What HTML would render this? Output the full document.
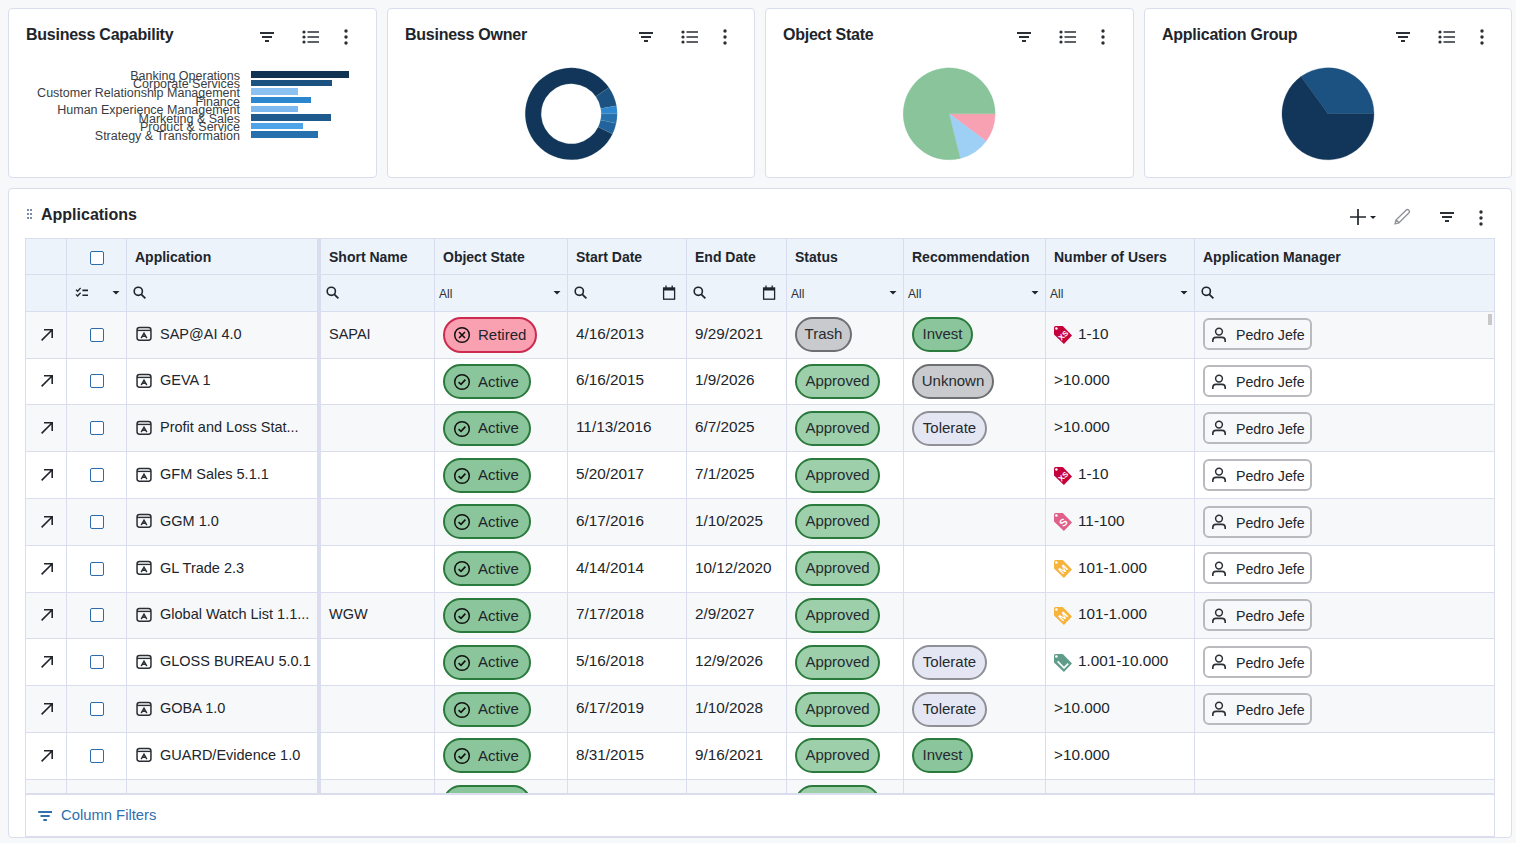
<!DOCTYPE html><html><head><meta charset="utf-8"><style>
*{box-sizing:border-box;margin:0;padding:0}
html,body{width:1516px;height:843px;overflow:hidden;background:#f7f8fa;font-family:"Liberation Sans",sans-serif;color:#21252b}
.ab{position:absolute;display:block}
.card{position:absolute;top:8px;height:170px;background:#fff;border:1px solid #d9ddee;border-radius:4px}
.ctitle{position:absolute;top:25px;font-size:16px;font-weight:bold;letter-spacing:-0.25px;line-height:20px;white-space:nowrap;color:#21252b}
.panel{position:absolute;left:8px;top:188px;width:1504px;height:650px;background:#fff;border:1px solid #d9ddee;border-radius:4px}
.t{position:absolute;white-space:nowrap;line-height:20px}
.hl{position:absolute;background:#d9ddee}
.cell{position:absolute;display:flex;align-items:center;white-space:nowrap}
.hd{font-size:14px;font-weight:bold;color:#21252b}
.all{font-size:12px;color:#2a2e35}
.txt{font-size:14.5px;color:#21252b}
.num{font-size:15.3px;color:#21252b}
.badge{position:absolute;height:35px;border-radius:18px;border:2px solid;display:flex;align-items:center;font-size:15px;color:#262a30;white-space:nowrap;padding-bottom:2px}
.person{position:absolute;height:32px;border-radius:6px;border:2px solid #b9babd;display:flex;align-items:center;font-size:14.2px;padding-top:1px;color:#21252b;white-space:nowrap}
.cb{position:absolute;width:14px;height:14px;border:1.5px solid #2d6cab;border-radius:2px;background:#fff}
</style></head><body>

<div class="card" style="left:8px;width:369px"></div>
<div class="ctitle" style="left:26px">Business Capability</div>
<svg class="ab" style="left:259px;top:32px" width="16" height="12" viewBox="0 0 16 12"><path d="M1 1H15M3 5H13M6 9H10" stroke="#2a2e35" stroke-width="2" fill="none"/></svg>
<svg class="ab" style="left:302px;top:30px" width="18" height="14" viewBox="0 0 18 14"><circle cx="2" cy="2" r="1.6" fill="#2a2e35"/><circle cx="2" cy="7" r="1.6" fill="#2a2e35"/><circle cx="2" cy="12" r="1.6" fill="#2a2e35"/><path d="M5.5 2H17M5.5 7H17M5.5 12H17" stroke="#2a2e35" stroke-width="1.6" fill="none"/></svg>
<svg class="ab" style="left:343px;top:29px" width="6" height="16" viewBox="0 0 6 16"><circle cx="3" cy="2" r="1.7" fill="#2a2e35"/><circle cx="3" cy="8" r="1.7" fill="#2a2e35"/><circle cx="3" cy="14" r="1.7" fill="#2a2e35"/></svg>
<div class="card" style="left:387px;width:368px"></div>
<div class="ctitle" style="left:405px">Business Owner</div>
<svg class="ab" style="left:638px;top:32px" width="16" height="12" viewBox="0 0 16 12"><path d="M1 1H15M3 5H13M6 9H10" stroke="#2a2e35" stroke-width="2" fill="none"/></svg>
<svg class="ab" style="left:681px;top:30px" width="18" height="14" viewBox="0 0 18 14"><circle cx="2" cy="2" r="1.6" fill="#2a2e35"/><circle cx="2" cy="7" r="1.6" fill="#2a2e35"/><circle cx="2" cy="12" r="1.6" fill="#2a2e35"/><path d="M5.5 2H17M5.5 7H17M5.5 12H17" stroke="#2a2e35" stroke-width="1.6" fill="none"/></svg>
<svg class="ab" style="left:722px;top:29px" width="6" height="16" viewBox="0 0 6 16"><circle cx="3" cy="2" r="1.7" fill="#2a2e35"/><circle cx="3" cy="8" r="1.7" fill="#2a2e35"/><circle cx="3" cy="14" r="1.7" fill="#2a2e35"/></svg>
<div class="card" style="left:765px;width:369px"></div>
<div class="ctitle" style="left:783px">Object State</div>
<svg class="ab" style="left:1016px;top:32px" width="16" height="12" viewBox="0 0 16 12"><path d="M1 1H15M3 5H13M6 9H10" stroke="#2a2e35" stroke-width="2" fill="none"/></svg>
<svg class="ab" style="left:1059px;top:30px" width="18" height="14" viewBox="0 0 18 14"><circle cx="2" cy="2" r="1.6" fill="#2a2e35"/><circle cx="2" cy="7" r="1.6" fill="#2a2e35"/><circle cx="2" cy="12" r="1.6" fill="#2a2e35"/><path d="M5.5 2H17M5.5 7H17M5.5 12H17" stroke="#2a2e35" stroke-width="1.6" fill="none"/></svg>
<svg class="ab" style="left:1100px;top:29px" width="6" height="16" viewBox="0 0 6 16"><circle cx="3" cy="2" r="1.7" fill="#2a2e35"/><circle cx="3" cy="8" r="1.7" fill="#2a2e35"/><circle cx="3" cy="14" r="1.7" fill="#2a2e35"/></svg>
<div class="card" style="left:1144px;width:368px"></div>
<div class="ctitle" style="left:1162px">Application Group</div>
<svg class="ab" style="left:1395px;top:32px" width="16" height="12" viewBox="0 0 16 12"><path d="M1 1H15M3 5H13M6 9H10" stroke="#2a2e35" stroke-width="2" fill="none"/></svg>
<svg class="ab" style="left:1438px;top:30px" width="18" height="14" viewBox="0 0 18 14"><circle cx="2" cy="2" r="1.6" fill="#2a2e35"/><circle cx="2" cy="7" r="1.6" fill="#2a2e35"/><circle cx="2" cy="12" r="1.6" fill="#2a2e35"/><path d="M5.5 2H17M5.5 7H17M5.5 12H17" stroke="#2a2e35" stroke-width="1.6" fill="none"/></svg>
<svg class="ab" style="left:1479px;top:29px" width="6" height="16" viewBox="0 0 6 16"><circle cx="3" cy="2" r="1.7" fill="#2a2e35"/><circle cx="3" cy="8" r="1.7" fill="#2a2e35"/><circle cx="3" cy="14" r="1.7" fill="#2a2e35"/></svg>
<div class="ab" style="left:251px;top:71.2px;width:98px;height:6.4px;background:#0f3352"></div>
<div class="t" style="right:1276px;top:68.7px;font-size:12.5px;line-height:14px;color:#3a3d42">Banking Operations</div>
<div class="ab" style="left:251px;top:79.8px;width:81px;height:6.4px;background:#1b5280"></div>
<div class="t" style="right:1276px;top:77.3px;font-size:12.5px;line-height:14px;color:#3a3d42">Corporate Services</div>
<div class="ab" style="left:251px;top:88.4px;width:47px;height:6.4px;background:#8cc2f1"></div>
<div class="t" style="right:1276px;top:85.9px;font-size:12.5px;line-height:14px;color:#3a3d42">Customer Relationship Management</div>
<div class="ab" style="left:251px;top:97.0px;width:60px;height:6.4px;background:#2d87cf"></div>
<div class="t" style="right:1276px;top:94.5px;font-size:12.5px;line-height:14px;color:#3a3d42">Finance</div>
<div class="ab" style="left:251px;top:105.6px;width:47px;height:6.4px;background:#7db9ee"></div>
<div class="t" style="right:1276px;top:103.1px;font-size:12.5px;line-height:14px;color:#3a3d42">Human Experience Management</div>
<div class="ab" style="left:251px;top:114.2px;width:80px;height:6.4px;background:#1e5a8d"></div>
<div class="t" style="right:1276px;top:111.7px;font-size:12.5px;line-height:14px;color:#3a3d42">Marketing &amp; Sales</div>
<div class="ab" style="left:251px;top:122.8px;width:52px;height:6.4px;background:#4fa4e8"></div>
<div class="t" style="right:1276px;top:120.3px;font-size:12.5px;line-height:14px;color:#3a3d42">Product &amp; Service</div>
<div class="ab" style="left:251px;top:131.4px;width:67px;height:6.4px;background:#2670ae"></div>
<div class="t" style="right:1276px;top:128.9px;font-size:12.5px;line-height:14px;color:#3a3d42">Strategy &amp; Transformation</div>
<svg class="ab" style="left:0;top:0" width="1516" height="180" viewBox="0 0 1516 180"><path d="M608.88 87.42A46 46 0 0 1 616.50 105.81L600.74 108.59A30 30 0 0 0 595.77 96.59Z" fill="#1c5282" stroke="#8aa" stroke-opacity="0.5" stroke-width="0.3"/><path d="M616.50 105.81A46 46 0 0 1 617.20 113.80L601.20 113.80A30 30 0 0 0 600.74 108.59Z" fill="#2f87d0" stroke="#8aa" stroke-opacity="0.5" stroke-width="0.3"/><path d="M617.20 113.80A46 46 0 0 1 616.19 123.36L600.54 120.04A30 30 0 0 0 601.20 113.80Z" fill="#2770ae" stroke="#8aa" stroke-opacity="0.5" stroke-width="0.3"/><path d="M616.19 123.36A46 46 0 0 1 612.54 133.97L598.16 126.95A30 30 0 0 0 600.54 120.04Z" fill="#22639d" stroke="#8aa" stroke-opacity="0.5" stroke-width="0.3"/><path d="M612.54 133.97A46 46 0 1 1 608.88 87.42L595.77 96.59A30 30 0 1 0 598.16 126.95Z" fill="#11365a" stroke="#8aa" stroke-opacity="0.5" stroke-width="0.3"/><path d="M949.20 113.80L995.20 113.80A46 46 0 0 1 986.18 141.16Z" fill="#f8a1b2" stroke="#f8a1b2" stroke-width="0.3"/><path d="M949.20 113.80L986.18 141.16A46 46 0 0 1 960.33 158.43Z" fill="#9ecff4" stroke="#9ecff4" stroke-width="0.3"/><path d="M949.20 113.80L960.33 158.43A46 46 0 1 1 995.20 113.80Z" fill="#89c49b" stroke="#89c49b" stroke-width="0.3"/><path d="M1328.00 113.80L1300.96 76.59A46 46 0 0 1 1374.00 113.80Z" fill="#1b5281" stroke="#1b5281" stroke-width="0.3"/><path d="M1328.00 113.80L1374.00 113.80A46 46 0 1 1 1300.96 76.59Z" fill="#11365a" stroke="#11365a" stroke-width="0.3"/></svg>
<div class="panel"></div>
<div class="ab" style="left:27px;top:209px;width:2px;height:2px;background:#7d8ca3"></div>
<div class="ab" style="left:27px;top:213px;width:2px;height:2px;background:#7d8ca3"></div>
<div class="ab" style="left:27px;top:217px;width:2px;height:2px;background:#7d8ca3"></div>
<div class="ab" style="left:30px;top:209px;width:2px;height:2px;background:#7d8ca3"></div>
<div class="ab" style="left:30px;top:213px;width:2px;height:2px;background:#7d8ca3"></div>
<div class="ab" style="left:30px;top:217px;width:2px;height:2px;background:#7d8ca3"></div>
<div class="t" style="left:41px;top:205px;font-size:16px;font-weight:bold;color:#21252b">Applications</div>
<svg class="ab" style="left:1349px;top:208px" width="30" height="18" viewBox="0 0 30 18"><path d="M9 1V17M1 9H17" stroke="#21252b" stroke-width="1.7" fill="none"/><path d="M21 8H27L24 11Z" fill="#21252b"/></svg>
<svg class="ab" style="left:1393px;top:208px" width="18" height="18" viewBox="0 0 18 18"><path d="M2 16L3 12L13 2.2A1.6 1.6 0 0 1 15.8 5L6 14.8Z M3.5 12.2L5.8 14.5" stroke="#8f9296" stroke-width="1.3" fill="none" stroke-linejoin="round"/></svg>
<svg class="ab" style="left:1439px;top:212px" width="16" height="12" viewBox="0 0 16 12"><path d="M1 1H15M3 5H13M6 9H10" stroke="#2a2e35" stroke-width="2" fill="none"/></svg>
<svg class="ab" style="left:1478px;top:210px" width="6" height="16" viewBox="0 0 6 16"><circle cx="3" cy="2" r="1.7" fill="#2a2e35"/><circle cx="3" cy="8" r="1.7" fill="#2a2e35"/><circle cx="3" cy="14" r="1.7" fill="#2a2e35"/></svg>
<div class="ab" style="left:25px;top:238px;width:1470px;height:73px;background:#ecf3fb"></div>
<div class="ab" style="left:25px;top:311px;width:1470px;height:47px;background:#f7f8fa"></div>
<div class="ab" style="left:25px;top:358px;width:1470px;height:46px;background:#ffffff"></div>
<div class="ab" style="left:25px;top:404px;width:1470px;height:47px;background:#f7f8fa"></div>
<div class="ab" style="left:25px;top:451px;width:1470px;height:47px;background:#ffffff"></div>
<div class="ab" style="left:25px;top:498px;width:1470px;height:47px;background:#f7f8fa"></div>
<div class="ab" style="left:25px;top:545px;width:1470px;height:47px;background:#ffffff"></div>
<div class="ab" style="left:25px;top:592px;width:1470px;height:46px;background:#f7f8fa"></div>
<div class="ab" style="left:25px;top:638px;width:1470px;height:47px;background:#ffffff"></div>
<div class="ab" style="left:25px;top:685px;width:1470px;height:47px;background:#f7f8fa"></div>
<div class="ab" style="left:25px;top:732px;width:1470px;height:47px;background:#ffffff"></div>
<div class="ab" style="left:25px;top:779px;width:1470px;height:15px;background:#f7f8fa"></div>
<div class="ab" style="left:25px;top:794px;width:1470px;height:44px;background:#fff"></div>
<svg class="ab" style="left:40px;top:328px" width="14" height="14" viewBox="0 0 14 14"><path d="M1.6 12.4L12 2M4 1.8H12.2V10" stroke="#21252b" stroke-width="1.6" fill="none"/></svg>
<div class="cb" style="left:90px;top:328px"></div>
<svg class="ab" style="left:136px;top:326px" width="17" height="16" viewBox="0 0 17 16"><rect x="1.05" y="1.55" width="13.9" height="12.7" rx="2.4" stroke="#2a2e35" stroke-width="1.5" fill="none"/><path d="M1 4.4H15" stroke="#2a2e35" stroke-width="1.4"/><path d="M5.2 12.1L8 7.2L10.8 12.1M6.4 10.3H9.6" stroke="#2a2e35" stroke-width="1.5" fill="none"/></svg>
<div class="t txt" style="left:160px;top:324px">SAP@AI 4.0</div>
<div class="t txt" style="left:329px;top:324px">SAPAI</div>
<div class="badge" style="left:443px;top:317px;height:36px;width:94px;background:#f9a1b1;border-color:#cc2a4e"></div>
<svg class="ab" style="left:453px;top:326px" width="18" height="18" viewBox="0 0 18 18"><circle cx="9" cy="9" r="7.3" stroke="#111" stroke-width="1.5" fill="none"/><path d="M6 6L12 12M12 6L6 12" stroke="#111" stroke-width="1.6"/></svg>
<div class="t txt" style="left:478px;top:325px;font-size:15px">Retired</div>
<div class="t num" style="left:576px;top:324px">4/16/2013</div>
<div class="t num" style="left:695px;top:324px">9/29/2021</div>
<div class="badge" style="left:795px;top:317px;width:57px;background:#c9cacd;border-color:#6e6f72;justify-content:center">Trash</div>
<div class="badge" style="left:912px;top:317px;width:61px;background:#8bc59b;border-color:#2b7a3d;justify-content:center">Invest</div>
<svg class="ab" style="left:1054px;top:326px" width="19" height="19" viewBox="0 0 19 19"><path d="M1.6 0H8.8L18 9.5L9.9 18L0 8.5V1.6Q0 0 1.6 0Z" fill="#c5003b"/><circle cx="2.4" cy="2.5" r="1.3" fill="#fff"/><text x="0" y="0" transform="translate(9.2 9.3) rotate(-45)" font-family="Liberation Sans" font-size="7.6" font-weight="bold" fill="#fff" text-anchor="middle" dy="2.74">XS</text></svg>
<div class="t num" style="left:1078px;top:324px">1-10</div>
<div class="person" style="left:1203px;top:318px;width:109px;padding-left:31px">Pedro Jefe</div>
<svg class="ab" style="left:1211px;top:327px" width="16" height="16" viewBox="0 0 16 16"><circle cx="8" cy="4.6" r="3.4" stroke="#2a2e35" stroke-width="1.5" fill="none"/><path d="M1.8 15V13.6A3.2 3.2 0 0 1 5 10.4H11A3.2 3.2 0 0 1 14.2 13.6V15" stroke="#2a2e35" stroke-width="1.6" fill="none"/></svg>
<svg class="ab" style="left:40px;top:374px" width="14" height="14" viewBox="0 0 14 14"><path d="M1.6 12.4L12 2M4 1.8H12.2V10" stroke="#21252b" stroke-width="1.6" fill="none"/></svg>
<div class="cb" style="left:90px;top:374px"></div>
<svg class="ab" style="left:136px;top:373px" width="17" height="16" viewBox="0 0 17 16"><rect x="1.05" y="1.55" width="13.9" height="12.7" rx="2.4" stroke="#2a2e35" stroke-width="1.5" fill="none"/><path d="M1 4.4H15" stroke="#2a2e35" stroke-width="1.4"/><path d="M5.2 12.1L8 7.2L10.8 12.1M6.4 10.3H9.6" stroke="#2a2e35" stroke-width="1.5" fill="none"/></svg>
<div class="t txt" style="left:160px;top:370px">GEVA 1</div>
<div class="badge" style="left:443px;top:364px;height:35px;width:88px;background:#8bc59b;border-color:#2b7a3d"></div>
<svg class="ab" style="left:453px;top:373px" width="18" height="18" viewBox="0 0 18 18"><circle cx="9" cy="9" r="7.3" stroke="#111" stroke-width="1.5" fill="none"/><path d="M5.6 9.2L8 11.4L12.4 6.6" stroke="#111" stroke-width="1.6" fill="none"/></svg>
<div class="t txt" style="left:478px;top:372px;font-size:15px">Active</div>
<div class="t num" style="left:576px;top:370px">6/16/2015</div>
<div class="t num" style="left:695px;top:370px">1/9/2026</div>
<div class="badge" style="left:795px;top:364px;width:85px;background:#9dd0aa;border-color:#2b7a3d;justify-content:center">Approved</div>
<div class="badge" style="left:912px;top:364px;width:82px;background:#c9cacd;border-color:#6e6f72;justify-content:center">Unknown</div>
<div class="t num" style="left:1054px;top:370px">&gt;10.000</div>
<div class="person" style="left:1203px;top:365px;width:109px;padding-left:31px">Pedro Jefe</div>
<svg class="ab" style="left:1211px;top:374px" width="16" height="16" viewBox="0 0 16 16"><circle cx="8" cy="4.6" r="3.4" stroke="#2a2e35" stroke-width="1.5" fill="none"/><path d="M1.8 15V13.6A3.2 3.2 0 0 1 5 10.4H11A3.2 3.2 0 0 1 14.2 13.6V15" stroke="#2a2e35" stroke-width="1.6" fill="none"/></svg>
<svg class="ab" style="left:40px;top:421px" width="14" height="14" viewBox="0 0 14 14"><path d="M1.6 12.4L12 2M4 1.8H12.2V10" stroke="#21252b" stroke-width="1.6" fill="none"/></svg>
<div class="cb" style="left:90px;top:421px"></div>
<svg class="ab" style="left:136px;top:420px" width="17" height="16" viewBox="0 0 17 16"><rect x="1.05" y="1.55" width="13.9" height="12.7" rx="2.4" stroke="#2a2e35" stroke-width="1.5" fill="none"/><path d="M1 4.4H15" stroke="#2a2e35" stroke-width="1.4"/><path d="M5.2 12.1L8 7.2L10.8 12.1M6.4 10.3H9.6" stroke="#2a2e35" stroke-width="1.5" fill="none"/></svg>
<div class="t txt" style="left:160px;top:417px">Profit and Loss Stat...</div>
<div class="badge" style="left:443px;top:411px;height:35px;width:88px;background:#8bc59b;border-color:#2b7a3d"></div>
<svg class="ab" style="left:453px;top:420px" width="18" height="18" viewBox="0 0 18 18"><circle cx="9" cy="9" r="7.3" stroke="#111" stroke-width="1.5" fill="none"/><path d="M5.6 9.2L8 11.4L12.4 6.6" stroke="#111" stroke-width="1.6" fill="none"/></svg>
<div class="t txt" style="left:478px;top:418px;font-size:15px">Active</div>
<div class="t num" style="left:576px;top:417px">11/13/2016</div>
<div class="t num" style="left:695px;top:417px">6/7/2025</div>
<div class="badge" style="left:795px;top:411px;width:85px;background:#9dd0aa;border-color:#2b7a3d;justify-content:center">Approved</div>
<div class="badge" style="left:912px;top:411px;width:75px;background:#e4e7f3;border-color:#8e9096;justify-content:center">Tolerate</div>
<div class="t num" style="left:1054px;top:417px">&gt;10.000</div>
<div class="person" style="left:1203px;top:412px;width:109px;padding-left:31px">Pedro Jefe</div>
<svg class="ab" style="left:1211px;top:420px" width="16" height="16" viewBox="0 0 16 16"><circle cx="8" cy="4.6" r="3.4" stroke="#2a2e35" stroke-width="1.5" fill="none"/><path d="M1.8 15V13.6A3.2 3.2 0 0 1 5 10.4H11A3.2 3.2 0 0 1 14.2 13.6V15" stroke="#2a2e35" stroke-width="1.6" fill="none"/></svg>
<svg class="ab" style="left:40px;top:468px" width="14" height="14" viewBox="0 0 14 14"><path d="M1.6 12.4L12 2M4 1.8H12.2V10" stroke="#21252b" stroke-width="1.6" fill="none"/></svg>
<div class="cb" style="left:90px;top:468px"></div>
<svg class="ab" style="left:136px;top:467px" width="17" height="16" viewBox="0 0 17 16"><rect x="1.05" y="1.55" width="13.9" height="12.7" rx="2.4" stroke="#2a2e35" stroke-width="1.5" fill="none"/><path d="M1 4.4H15" stroke="#2a2e35" stroke-width="1.4"/><path d="M5.2 12.1L8 7.2L10.8 12.1M6.4 10.3H9.6" stroke="#2a2e35" stroke-width="1.5" fill="none"/></svg>
<div class="t txt" style="left:160px;top:464px">GFM Sales 5.1.1</div>
<div class="badge" style="left:443px;top:458px;height:35px;width:88px;background:#8bc59b;border-color:#2b7a3d"></div>
<svg class="ab" style="left:453px;top:467px" width="18" height="18" viewBox="0 0 18 18"><circle cx="9" cy="9" r="7.3" stroke="#111" stroke-width="1.5" fill="none"/><path d="M5.6 9.2L8 11.4L12.4 6.6" stroke="#111" stroke-width="1.6" fill="none"/></svg>
<div class="t txt" style="left:478px;top:465px;font-size:15px">Active</div>
<div class="t num" style="left:576px;top:464px">5/20/2017</div>
<div class="t num" style="left:695px;top:464px">7/1/2025</div>
<div class="badge" style="left:795px;top:458px;width:85px;background:#9dd0aa;border-color:#2b7a3d;justify-content:center">Approved</div>
<svg class="ab" style="left:1054px;top:467px" width="19" height="19" viewBox="0 0 19 19"><path d="M1.6 0H8.8L18 9.5L9.9 18L0 8.5V1.6Q0 0 1.6 0Z" fill="#c5003b"/><circle cx="2.4" cy="2.5" r="1.3" fill="#fff"/><text x="0" y="0" transform="translate(9.2 9.3) rotate(-45)" font-family="Liberation Sans" font-size="7.6" font-weight="bold" fill="#fff" text-anchor="middle" dy="2.74">XS</text></svg>
<div class="t num" style="left:1078px;top:464px">1-10</div>
<div class="person" style="left:1203px;top:459px;width:109px;padding-left:31px">Pedro Jefe</div>
<svg class="ab" style="left:1211px;top:467px" width="16" height="16" viewBox="0 0 16 16"><circle cx="8" cy="4.6" r="3.4" stroke="#2a2e35" stroke-width="1.5" fill="none"/><path d="M1.8 15V13.6A3.2 3.2 0 0 1 5 10.4H11A3.2 3.2 0 0 1 14.2 13.6V15" stroke="#2a2e35" stroke-width="1.6" fill="none"/></svg>
<svg class="ab" style="left:40px;top:515px" width="14" height="14" viewBox="0 0 14 14"><path d="M1.6 12.4L12 2M4 1.8H12.2V10" stroke="#21252b" stroke-width="1.6" fill="none"/></svg>
<div class="cb" style="left:90px;top:515px"></div>
<svg class="ab" style="left:136px;top:513px" width="17" height="16" viewBox="0 0 17 16"><rect x="1.05" y="1.55" width="13.9" height="12.7" rx="2.4" stroke="#2a2e35" stroke-width="1.5" fill="none"/><path d="M1 4.4H15" stroke="#2a2e35" stroke-width="1.4"/><path d="M5.2 12.1L8 7.2L10.8 12.1M6.4 10.3H9.6" stroke="#2a2e35" stroke-width="1.5" fill="none"/></svg>
<div class="t txt" style="left:160px;top:511px">GGM 1.0</div>
<div class="badge" style="left:443px;top:504px;height:35px;width:88px;background:#8bc59b;border-color:#2b7a3d"></div>
<svg class="ab" style="left:453px;top:513px" width="18" height="18" viewBox="0 0 18 18"><circle cx="9" cy="9" r="7.3" stroke="#111" stroke-width="1.5" fill="none"/><path d="M5.6 9.2L8 11.4L12.4 6.6" stroke="#111" stroke-width="1.6" fill="none"/></svg>
<div class="t txt" style="left:478px;top:512px;font-size:15px">Active</div>
<div class="t num" style="left:576px;top:511px">6/17/2016</div>
<div class="t num" style="left:695px;top:511px">1/10/2025</div>
<div class="badge" style="left:795px;top:504px;width:85px;background:#9dd0aa;border-color:#2b7a3d;justify-content:center">Approved</div>
<svg class="ab" style="left:1054px;top:513px" width="19" height="19" viewBox="0 0 19 19"><path d="M1.6 0H8.8L18 9.5L9.9 18L0 8.5V1.6Q0 0 1.6 0Z" fill="#df6088"/><circle cx="2.4" cy="2.5" r="1.3" fill="#fff"/><text x="0" y="0" transform="translate(9.2 9.3) rotate(-45)" font-family="Liberation Sans" font-size="10.5" font-weight="bold" fill="#fff" text-anchor="middle" dy="3.78">S</text></svg>
<div class="t num" style="left:1078px;top:511px">11-100</div>
<div class="person" style="left:1203px;top:506px;width:109px;padding-left:31px">Pedro Jefe</div>
<svg class="ab" style="left:1211px;top:514px" width="16" height="16" viewBox="0 0 16 16"><circle cx="8" cy="4.6" r="3.4" stroke="#2a2e35" stroke-width="1.5" fill="none"/><path d="M1.8 15V13.6A3.2 3.2 0 0 1 5 10.4H11A3.2 3.2 0 0 1 14.2 13.6V15" stroke="#2a2e35" stroke-width="1.6" fill="none"/></svg>
<svg class="ab" style="left:40px;top:562px" width="14" height="14" viewBox="0 0 14 14"><path d="M1.6 12.4L12 2M4 1.8H12.2V10" stroke="#21252b" stroke-width="1.6" fill="none"/></svg>
<div class="cb" style="left:90px;top:562px"></div>
<svg class="ab" style="left:136px;top:560px" width="17" height="16" viewBox="0 0 17 16"><rect x="1.05" y="1.55" width="13.9" height="12.7" rx="2.4" stroke="#2a2e35" stroke-width="1.5" fill="none"/><path d="M1 4.4H15" stroke="#2a2e35" stroke-width="1.4"/><path d="M5.2 12.1L8 7.2L10.8 12.1M6.4 10.3H9.6" stroke="#2a2e35" stroke-width="1.5" fill="none"/></svg>
<div class="t txt" style="left:160px;top:558px">GL Trade 2.3</div>
<div class="badge" style="left:443px;top:551px;height:35px;width:88px;background:#8bc59b;border-color:#2b7a3d"></div>
<svg class="ab" style="left:453px;top:560px" width="18" height="18" viewBox="0 0 18 18"><circle cx="9" cy="9" r="7.3" stroke="#111" stroke-width="1.5" fill="none"/><path d="M5.6 9.2L8 11.4L12.4 6.6" stroke="#111" stroke-width="1.6" fill="none"/></svg>
<div class="t txt" style="left:478px;top:559px;font-size:15px">Active</div>
<div class="t num" style="left:576px;top:558px">4/14/2014</div>
<div class="t num" style="left:695px;top:558px">10/12/2020</div>
<div class="badge" style="left:795px;top:551px;width:85px;background:#9dd0aa;border-color:#2b7a3d;justify-content:center">Approved</div>
<svg class="ab" style="left:1054px;top:560px" width="19" height="19" viewBox="0 0 19 19"><path d="M1.6 0H8.8L18 9.5L9.9 18L0 8.5V1.6Q0 0 1.6 0Z" fill="#f6b43c"/><circle cx="2.4" cy="2.5" r="1.3" fill="#fff"/><text x="0" y="0" transform="translate(9.2 9.3) rotate(-45)" font-family="Liberation Sans" font-size="10" font-weight="bold" fill="#fff" text-anchor="middle" dy="3.60">M</text></svg>
<div class="t num" style="left:1078px;top:558px">101-1.000</div>
<div class="person" style="left:1203px;top:552px;width:109px;padding-left:31px">Pedro Jefe</div>
<svg class="ab" style="left:1211px;top:561px" width="16" height="16" viewBox="0 0 16 16"><circle cx="8" cy="4.6" r="3.4" stroke="#2a2e35" stroke-width="1.5" fill="none"/><path d="M1.8 15V13.6A3.2 3.2 0 0 1 5 10.4H11A3.2 3.2 0 0 1 14.2 13.6V15" stroke="#2a2e35" stroke-width="1.6" fill="none"/></svg>
<svg class="ab" style="left:40px;top:608px" width="14" height="14" viewBox="0 0 14 14"><path d="M1.6 12.4L12 2M4 1.8H12.2V10" stroke="#21252b" stroke-width="1.6" fill="none"/></svg>
<div class="cb" style="left:90px;top:608px"></div>
<svg class="ab" style="left:136px;top:607px" width="17" height="16" viewBox="0 0 17 16"><rect x="1.05" y="1.55" width="13.9" height="12.7" rx="2.4" stroke="#2a2e35" stroke-width="1.5" fill="none"/><path d="M1 4.4H15" stroke="#2a2e35" stroke-width="1.4"/><path d="M5.2 12.1L8 7.2L10.8 12.1M6.4 10.3H9.6" stroke="#2a2e35" stroke-width="1.5" fill="none"/></svg>
<div class="t txt" style="left:160px;top:604px">Global Watch List 1.1...</div>
<div class="t txt" style="left:329px;top:604px">WGW</div>
<div class="badge" style="left:443px;top:598px;height:35px;width:88px;background:#8bc59b;border-color:#2b7a3d"></div>
<svg class="ab" style="left:453px;top:607px" width="18" height="18" viewBox="0 0 18 18"><circle cx="9" cy="9" r="7.3" stroke="#111" stroke-width="1.5" fill="none"/><path d="M5.6 9.2L8 11.4L12.4 6.6" stroke="#111" stroke-width="1.6" fill="none"/></svg>
<div class="t txt" style="left:478px;top:606px;font-size:15px">Active</div>
<div class="t num" style="left:576px;top:604px">7/17/2018</div>
<div class="t num" style="left:695px;top:604px">2/9/2027</div>
<div class="badge" style="left:795px;top:598px;width:85px;background:#9dd0aa;border-color:#2b7a3d;justify-content:center">Approved</div>
<svg class="ab" style="left:1054px;top:607px" width="19" height="19" viewBox="0 0 19 19"><path d="M1.6 0H8.8L18 9.5L9.9 18L0 8.5V1.6Q0 0 1.6 0Z" fill="#f6b43c"/><circle cx="2.4" cy="2.5" r="1.3" fill="#fff"/><text x="0" y="0" transform="translate(9.2 9.3) rotate(-45)" font-family="Liberation Sans" font-size="10" font-weight="bold" fill="#fff" text-anchor="middle" dy="3.60">M</text></svg>
<div class="t num" style="left:1078px;top:604px">101-1.000</div>
<div class="person" style="left:1203px;top:599px;width:109px;padding-left:31px">Pedro Jefe</div>
<svg class="ab" style="left:1211px;top:608px" width="16" height="16" viewBox="0 0 16 16"><circle cx="8" cy="4.6" r="3.4" stroke="#2a2e35" stroke-width="1.5" fill="none"/><path d="M1.8 15V13.6A3.2 3.2 0 0 1 5 10.4H11A3.2 3.2 0 0 1 14.2 13.6V15" stroke="#2a2e35" stroke-width="1.6" fill="none"/></svg>
<svg class="ab" style="left:40px;top:655px" width="14" height="14" viewBox="0 0 14 14"><path d="M1.6 12.4L12 2M4 1.8H12.2V10" stroke="#21252b" stroke-width="1.6" fill="none"/></svg>
<div class="cb" style="left:90px;top:655px"></div>
<svg class="ab" style="left:136px;top:654px" width="17" height="16" viewBox="0 0 17 16"><rect x="1.05" y="1.55" width="13.9" height="12.7" rx="2.4" stroke="#2a2e35" stroke-width="1.5" fill="none"/><path d="M1 4.4H15" stroke="#2a2e35" stroke-width="1.4"/><path d="M5.2 12.1L8 7.2L10.8 12.1M6.4 10.3H9.6" stroke="#2a2e35" stroke-width="1.5" fill="none"/></svg>
<div class="t txt" style="left:160px;top:651px">GLOSS BUREAU 5.0.1</div>
<div class="badge" style="left:443px;top:645px;height:35px;width:88px;background:#8bc59b;border-color:#2b7a3d"></div>
<svg class="ab" style="left:453px;top:654px" width="18" height="18" viewBox="0 0 18 18"><circle cx="9" cy="9" r="7.3" stroke="#111" stroke-width="1.5" fill="none"/><path d="M5.6 9.2L8 11.4L12.4 6.6" stroke="#111" stroke-width="1.6" fill="none"/></svg>
<div class="t txt" style="left:478px;top:652px;font-size:15px">Active</div>
<div class="t num" style="left:576px;top:651px">5/16/2018</div>
<div class="t num" style="left:695px;top:651px">12/9/2026</div>
<div class="badge" style="left:795px;top:645px;width:85px;background:#9dd0aa;border-color:#2b7a3d;justify-content:center">Approved</div>
<div class="badge" style="left:912px;top:645px;width:75px;background:#e4e7f3;border-color:#8e9096;justify-content:center">Tolerate</div>
<svg class="ab" style="left:1054px;top:654px" width="19" height="19" viewBox="0 0 19 19"><path d="M1.6 0H8.8L18 9.5L9.9 18L0 8.5V1.6Q0 0 1.6 0Z" fill="#5f9c8a"/><circle cx="2.4" cy="2.5" r="1.3" fill="#fff"/><path d="M3.6 7.4L10 13.8L14.2 9.6" stroke="#fff" stroke-width="1.6" fill="none"/></svg>
<div class="t num" style="left:1078px;top:651px">1.001-10.000</div>
<div class="person" style="left:1203px;top:646px;width:109px;padding-left:31px">Pedro Jefe</div>
<svg class="ab" style="left:1211px;top:654px" width="16" height="16" viewBox="0 0 16 16"><circle cx="8" cy="4.6" r="3.4" stroke="#2a2e35" stroke-width="1.5" fill="none"/><path d="M1.8 15V13.6A3.2 3.2 0 0 1 5 10.4H11A3.2 3.2 0 0 1 14.2 13.6V15" stroke="#2a2e35" stroke-width="1.6" fill="none"/></svg>
<svg class="ab" style="left:40px;top:702px" width="14" height="14" viewBox="0 0 14 14"><path d="M1.6 12.4L12 2M4 1.8H12.2V10" stroke="#21252b" stroke-width="1.6" fill="none"/></svg>
<div class="cb" style="left:90px;top:702px"></div>
<svg class="ab" style="left:136px;top:701px" width="17" height="16" viewBox="0 0 17 16"><rect x="1.05" y="1.55" width="13.9" height="12.7" rx="2.4" stroke="#2a2e35" stroke-width="1.5" fill="none"/><path d="M1 4.4H15" stroke="#2a2e35" stroke-width="1.4"/><path d="M5.2 12.1L8 7.2L10.8 12.1M6.4 10.3H9.6" stroke="#2a2e35" stroke-width="1.5" fill="none"/></svg>
<div class="t txt" style="left:160px;top:698px">GOBA 1.0</div>
<div class="badge" style="left:443px;top:692px;height:35px;width:88px;background:#8bc59b;border-color:#2b7a3d"></div>
<svg class="ab" style="left:453px;top:701px" width="18" height="18" viewBox="0 0 18 18"><circle cx="9" cy="9" r="7.3" stroke="#111" stroke-width="1.5" fill="none"/><path d="M5.6 9.2L8 11.4L12.4 6.6" stroke="#111" stroke-width="1.6" fill="none"/></svg>
<div class="t txt" style="left:478px;top:699px;font-size:15px">Active</div>
<div class="t num" style="left:576px;top:698px">6/17/2019</div>
<div class="t num" style="left:695px;top:698px">1/10/2028</div>
<div class="badge" style="left:795px;top:692px;width:85px;background:#9dd0aa;border-color:#2b7a3d;justify-content:center">Approved</div>
<div class="badge" style="left:912px;top:692px;width:75px;background:#e4e7f3;border-color:#8e9096;justify-content:center">Tolerate</div>
<div class="t num" style="left:1054px;top:698px">&gt;10.000</div>
<div class="person" style="left:1203px;top:693px;width:109px;padding-left:31px">Pedro Jefe</div>
<svg class="ab" style="left:1211px;top:701px" width="16" height="16" viewBox="0 0 16 16"><circle cx="8" cy="4.6" r="3.4" stroke="#2a2e35" stroke-width="1.5" fill="none"/><path d="M1.8 15V13.6A3.2 3.2 0 0 1 5 10.4H11A3.2 3.2 0 0 1 14.2 13.6V15" stroke="#2a2e35" stroke-width="1.6" fill="none"/></svg>
<svg class="ab" style="left:40px;top:749px" width="14" height="14" viewBox="0 0 14 14"><path d="M1.6 12.4L12 2M4 1.8H12.2V10" stroke="#21252b" stroke-width="1.6" fill="none"/></svg>
<div class="cb" style="left:90px;top:749px"></div>
<svg class="ab" style="left:136px;top:747px" width="17" height="16" viewBox="0 0 17 16"><rect x="1.05" y="1.55" width="13.9" height="12.7" rx="2.4" stroke="#2a2e35" stroke-width="1.5" fill="none"/><path d="M1 4.4H15" stroke="#2a2e35" stroke-width="1.4"/><path d="M5.2 12.1L8 7.2L10.8 12.1M6.4 10.3H9.6" stroke="#2a2e35" stroke-width="1.5" fill="none"/></svg>
<div class="t txt" style="left:160px;top:745px">GUARD/Evidence 1.0</div>
<div class="badge" style="left:443px;top:738px;height:35px;width:88px;background:#8bc59b;border-color:#2b7a3d"></div>
<svg class="ab" style="left:453px;top:747px" width="18" height="18" viewBox="0 0 18 18"><circle cx="9" cy="9" r="7.3" stroke="#111" stroke-width="1.5" fill="none"/><path d="M5.6 9.2L8 11.4L12.4 6.6" stroke="#111" stroke-width="1.6" fill="none"/></svg>
<div class="t txt" style="left:478px;top:746px;font-size:15px">Active</div>
<div class="t num" style="left:576px;top:745px">8/31/2015</div>
<div class="t num" style="left:695px;top:745px">9/16/2021</div>
<div class="badge" style="left:795px;top:738px;width:85px;background:#9dd0aa;border-color:#2b7a3d;justify-content:center">Approved</div>
<div class="badge" style="left:912px;top:738px;width:61px;background:#8bc59b;border-color:#2b7a3d;justify-content:center">Invest</div>
<div class="t num" style="left:1054px;top:745px">&gt;10.000</div>
<div class="ab" style="left:0;top:779px;width:1516px;height:15px;overflow:hidden">
<div class="badge" style="left:443px;top:6px;width:88px;background:#8bc59b;border-color:#2b7a3d"></div>
<div class="badge" style="left:795px;top:6px;width:85px;background:#9dd0aa;border-color:#2b7a3d"></div>
</div>
<div class="hl" style="left:25px;top:238px;width:1px;height:556px"></div>
<div class="hl" style="left:66px;top:238px;width:1px;height:556px"></div>
<div class="hl" style="left:126px;top:238px;width:1px;height:556px"></div>
<div class="hl" style="left:317px;top:238px;width:4px;height:556px"></div>
<div class="hl" style="left:434px;top:238px;width:1px;height:556px"></div>
<div class="hl" style="left:567px;top:238px;width:1px;height:556px"></div>
<div class="hl" style="left:686px;top:238px;width:1px;height:556px"></div>
<div class="hl" style="left:786px;top:238px;width:1px;height:556px"></div>
<div class="hl" style="left:903px;top:238px;width:1px;height:556px"></div>
<div class="hl" style="left:1045px;top:238px;width:1px;height:556px"></div>
<div class="hl" style="left:1194px;top:238px;width:1px;height:556px"></div>
<div class="hl" style="left:1494px;top:238px;width:1px;height:556px"></div>
<div class="hl" style="left:25px;top:238px;width:1470px;height:1px"></div>
<div class="hl" style="left:25px;top:274px;width:1470px;height:1px"></div>
<div class="hl" style="left:25px;top:311px;width:1470px;height:1px"></div>
<div class="hl" style="left:25px;top:358px;width:1470px;height:1px"></div>
<div class="hl" style="left:25px;top:404px;width:1470px;height:1px"></div>
<div class="hl" style="left:25px;top:451px;width:1470px;height:1px"></div>
<div class="hl" style="left:25px;top:498px;width:1470px;height:1px"></div>
<div class="hl" style="left:25px;top:545px;width:1470px;height:1px"></div>
<div class="hl" style="left:25px;top:592px;width:1470px;height:1px"></div>
<div class="hl" style="left:25px;top:638px;width:1470px;height:1px"></div>
<div class="hl" style="left:25px;top:685px;width:1470px;height:1px"></div>
<div class="hl" style="left:25px;top:732px;width:1470px;height:1px"></div>
<div class="hl" style="left:25px;top:779px;width:1470px;height:1px"></div>
<div class="hl" style="left:25px;top:793px;width:1470px;height:2px"></div>
<div class="hl" style="left:25px;top:836px;width:1470px;height:2px"></div>
<div class="hl" style="left:25px;top:794px;width:1px;height:44px"></div>
<div class="hl" style="left:1494px;top:794px;width:1px;height:44px"></div>
<div class="cell hd" style="left:135px;top:239px;height:36px">Application</div>
<div class="cell hd" style="left:329px;top:239px;height:36px">Short Name</div>
<div class="cell hd" style="left:443px;top:239px;height:36px">Object State</div>
<div class="cell hd" style="left:576px;top:239px;height:36px">Start Date</div>
<div class="cell hd" style="left:695px;top:239px;height:36px">End Date</div>
<div class="cell hd" style="left:795px;top:239px;height:36px">Status</div>
<div class="cell hd" style="left:912px;top:239px;height:36px">Recommendation</div>
<div class="cell hd" style="left:1054px;top:239px;height:36px">Number of Users</div>
<div class="cell hd" style="left:1203px;top:239px;height:36px">Application Manager</div>
<div class="cb" style="left:90px;top:251px"></div>
<svg class="ab" style="left:133px;top:286px" width="14" height="14" viewBox="0 0 14 14"><circle cx="5.3" cy="5.3" r="4.1" stroke="#21252b" stroke-width="1.6" fill="none"/><path d="M8.3 8.3L12.4 12.4" stroke="#21252b" stroke-width="1.8"/></svg>
<svg class="ab" style="left:326px;top:286px" width="14" height="14" viewBox="0 0 14 14"><circle cx="5.3" cy="5.3" r="4.1" stroke="#21252b" stroke-width="1.6" fill="none"/><path d="M8.3 8.3L12.4 12.4" stroke="#21252b" stroke-width="1.8"/></svg>
<svg class="ab" style="left:574px;top:286px" width="14" height="14" viewBox="0 0 14 14"><circle cx="5.3" cy="5.3" r="4.1" stroke="#21252b" stroke-width="1.6" fill="none"/><path d="M8.3 8.3L12.4 12.4" stroke="#21252b" stroke-width="1.8"/></svg>
<svg class="ab" style="left:693px;top:286px" width="14" height="14" viewBox="0 0 14 14"><circle cx="5.3" cy="5.3" r="4.1" stroke="#21252b" stroke-width="1.6" fill="none"/><path d="M8.3 8.3L12.4 12.4" stroke="#21252b" stroke-width="1.8"/></svg>
<svg class="ab" style="left:1201px;top:286px" width="14" height="14" viewBox="0 0 14 14"><circle cx="5.3" cy="5.3" r="4.1" stroke="#21252b" stroke-width="1.6" fill="none"/><path d="M8.3 8.3L12.4 12.4" stroke="#21252b" stroke-width="1.8"/></svg>
<svg class="ab" style="left:662px;top:285px" width="14" height="16" viewBox="0 0 14 16"><rect x="1.6" y="3" width="11" height="11.2" stroke="#21252b" stroke-width="1.3" fill="none"/><path d="M1 4.2H13" stroke="#21252b" stroke-width="2.6"/><path d="M4 0.6V3M10.2 0.6V3" stroke="#21252b" stroke-width="1.3"/></svg>
<svg class="ab" style="left:762px;top:285px" width="14" height="16" viewBox="0 0 14 16"><rect x="1.6" y="3" width="11" height="11.2" stroke="#21252b" stroke-width="1.3" fill="none"/><path d="M1 4.2H13" stroke="#21252b" stroke-width="2.6"/><path d="M4 0.6V3M10.2 0.6V3" stroke="#21252b" stroke-width="1.3"/></svg>
<div class="t all" style="left:439px;top:284px">All</div>
<svg class="ab" style="left:553px;top:291px" width="8" height="4" viewBox="0 0 8 4"><path d="M0.5 0H7.5L4 3.6Z" fill="#21252b"/></svg>
<div class="t all" style="left:791px;top:284px">All</div>
<svg class="ab" style="left:889px;top:291px" width="8" height="4" viewBox="0 0 8 4"><path d="M0.5 0H7.5L4 3.6Z" fill="#21252b"/></svg>
<div class="t all" style="left:908px;top:284px">All</div>
<svg class="ab" style="left:1031px;top:291px" width="8" height="4" viewBox="0 0 8 4"><path d="M0.5 0H7.5L4 3.6Z" fill="#21252b"/></svg>
<div class="t all" style="left:1050px;top:284px">All</div>
<svg class="ab" style="left:1180px;top:291px" width="8" height="4" viewBox="0 0 8 4"><path d="M0.5 0H7.5L4 3.6Z" fill="#21252b"/></svg>
<svg class="ab" style="left:74px;top:286px" width="16" height="13" viewBox="0 0 16 13"><path d="M2 3.6L3.6 5.2L6.6 2M2 8.4L3.6 10L6.6 6.8" stroke="#21252b" stroke-width="1.3" fill="none"/><path d="M8.4 4.4H14M8.4 9.2H14" stroke="#21252b" stroke-width="1.6"/></svg>
<svg class="ab" style="left:112px;top:291px" width="8" height="4" viewBox="0 0 8 4"><path d="M0.5 0H7.5L4 3.6Z" fill="#21252b"/></svg>
<div class="ab" style="left:1488px;top:314px;width:4px;height:11px;background:#c8c8c8"></div>
<svg class="ab" style="left:37px;top:811px" width="16" height="12" viewBox="0 0 16 12"><path d="M1.2 1H15M3.5 5H12.7M6.3 9H9.9" stroke="#2f6fae" stroke-width="1.8" fill="none"/></svg>
<div class="t" style="left:61px;top:805px;font-size:14.8px;color:#2f6fae">Column Filters</div>
</body></html>
